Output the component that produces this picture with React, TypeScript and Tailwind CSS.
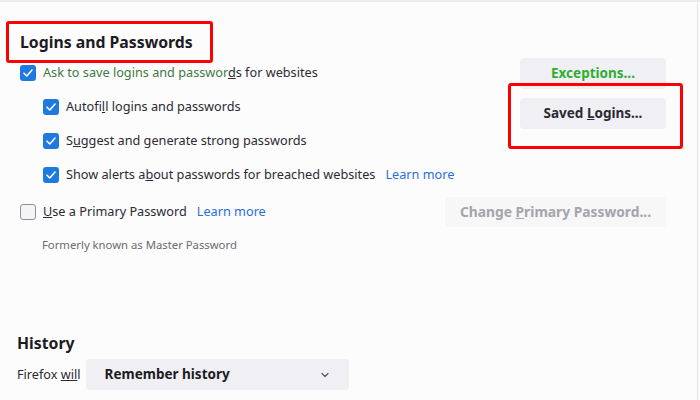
import React from 'react';

function Check({ checked }: { checked: boolean }) {
  if (!checked) {
    return <span className="block w-4 h-4 rounded-[3px] border border-[#8f8f9d] bg-[#f4f4f6] shrink-0" />;
  }
  return (
    <span className="flex items-center justify-center w-4 h-4 rounded-[3px] bg-[#1f7ae0] shrink-0">
      <svg width="12" height="12" viewBox="0 0 12 12" fill="none">
        <path d="M2 6.2 4.8 9 10 3" stroke="white" strokeWidth="1.6" strokeLinecap="round" strokeLinejoin="round" />
      </svg>
    </span>
  );
}

function Row({ checked, children, indent }: { checked: boolean; children: React.ReactNode; indent?: boolean }) {
  return (
    <div className={`flex items-center gap-[7px] h-[34px] ${indent ? 'pl-[23px]' : ''}`}>
      <Check checked={checked} />
      <span className="text-[#2b2a33] whitespace-nowrap">{children}</span>
    </div>
  );
}

export default function App() {
  return (
    <div
      className="relative w-[700px] h-[400px] overflow-hidden bg-[#fcfcfd] border-t-2 border-[#ececf0] text-[12.7px]"
      style={{ fontFamily: '"Noto Sans", "Open Sans", sans-serif' }}
    >
      <div className="absolute right-[2px] top-0 bottom-0 w-px bg-[#e4e4e8]" />

      <div className="pl-[20px] pr-[34px] pt-[28px]">
        <h1 className="text-[15.8px] font-bold text-[#1c1b22] leading-[24px]">Logins and Passwords</h1>

        <div className="flex justify-between mt-[2px]">
          <div className="flex flex-col">
            <Row checked>
              <span className="text-[#3d7a3f]">Ask to save logins and passwor</span>
              <span className="underline">d</span>s for websites
            </Row>
            <Row checked indent>
              Autofi<span className="underline">l</span>l logins and passwords
            </Row>
            <Row checked indent>
              S<span className="underline">u</span>ggest and generate strong passwords
            </Row>
            <Row checked indent>
              Show alerts a<span className="underline">b</span>out passwords for breached websites
              <span className="ml-[10px] text-[#2a6fd6]">Learn more</span>
            </Row>
          </div>
          <div className="flex flex-col gap-[9px] mt-[2px] text-[13.5px]">
            <button className="w-[146px] h-[31px] rounded-[4px] bg-[#f0f0f4] text-[#2fae2f] font-bold">
              Exceptions...
            </button>
            <button className="w-[146px] h-[31px] rounded-[4px] bg-[#f0f0f4] text-[#2b2a33] font-bold">
              Saved <span className="underline">L</span>ogins...
            </button>
          </div>
        </div>

        <div className="flex items-center justify-between mt-[3px]">
          <Row checked={false}>
            <span className="underline">U</span>se a Primary Password
            <span className="ml-[10px] text-[#2a6fd6]">Learn more</span>
          </Row>
          <button className="w-[221px] h-[30px] rounded-[4px] bg-[#f7f7f8] text-[#a4a4ab] font-bold text-[13.8px]">
            Change <span className="underline">P</span>rimary Password...
          </button>
        </div>
        <p className="pl-[22px] text-[11.3px] text-[#6b6a72] leading-[16px] mt-[8px]">Formerly known as Master Password</p>
      </div>

      <div className="pl-[17px] mt-[79px]">
        <h2 className="text-[15.8px] font-bold text-[#1c1b22] leading-[22px]">History</h2>
        <div className="flex items-center mt-[5px]">
          <span className="text-[#2b2a33] whitespace-nowrap mr-[5px]">
            Firefox <span className="underline">wil</span>l
          </span>
          <div className="flex items-center justify-between w-[263px] h-[31px] rounded-[4px] bg-[#f0f0f4] pl-[19px] pr-[18px]">
            <span className="font-bold text-[#1c1b22] text-[13.5px]">Remember history</span>
            <svg width="12" height="12" viewBox="0 0 12 12" fill="none">
              <path d="M3 4.5 6 7.5 9 4.5" stroke="#5b5b66" strokeWidth="1.3" strokeLinecap="round" strokeLinejoin="round" />
            </svg>
          </div>
        </div>
      </div>

      {/* annotation boxes */}
      <div className="absolute left-[6px] top-[19px] w-[207px] h-[42px] border-[3px] border-[#ff0000] rounded-[3px]" />
      <div className="absolute left-[508px] top-[81px] w-[175px] h-[66px] border-[3px] border-[#ff0000] rounded-[3px]" />
    </div>
  );
}
